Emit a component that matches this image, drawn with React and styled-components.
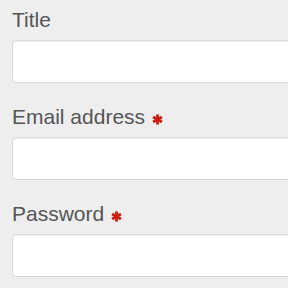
import React from "react";
import styled, { createGlobalStyle } from "styled-components";

const Global = createGlobalStyle`
  html, body {
    margin: 0;
    padding: 0;
    background: #eeeeee;
  }
  * { box-sizing: border-box; }
`;

const Form = styled.form`
  padding: 8px 0 0 12px;
  font-family: "Liberation Sans", Arial, Helvetica, sans-serif;
  width: 100%;
  overflow: hidden;
`;

const Field = styled.div`
  margin-bottom: 22px;
`;

const Label = styled.label`
  display: flex;
  align-items: center;
  height: 24px;
  line-height: 24px;
  font-size: 21px;
  color: #555555;
  margin-bottom: 8px;
`;

const Required = styled.span`
  display: inline-flex;
  margin-left: 7px;
  margin-top: 4px;
  color: #cc1f10;
`;

const Input = styled.input`
  display: block;
  width: calc(100% + 20px);
  height: 43px;
  border: 1px solid #d9d9d9;
  border-radius: 4px;
  background: #ffffff;
  box-shadow: inset 0 1px 1px rgba(0, 0, 0, 0.06);
  outline: none;
  font-family: inherit;
  font-size: 16px;
  padding: 0 10px;
`;

function Star() {
  return (
    <Required>
      <svg width="11" height="11" viewBox="0 0 12 12" aria-hidden="true">
        <g stroke="currentColor" strokeWidth="3.1" strokeLinecap="butt">
          <line x1="6" y1="0.5" x2="6" y2="11.5" />
          <line x1="1.2" y1="3.2" x2="10.8" y2="8.8" />
          <line x1="1.2" y1="8.8" x2="10.8" y2="3.2" />
        </g>
      </svg>
    </Required>
  );
}

export default function App() {
  return (
    <>
      <Global />
      <Form>
        <Field>
          <Label>Title</Label>
          <Input type="text" />
        </Field>
        <Field>
          <Label>
            Email address
            <Star />
          </Label>
          <Input type="email" />
        </Field>
        <Field>
          <Label>
            Password
            <Star />
          </Label>
          <Input type="password" />
        </Field>
      </Form>
    </>
  );
}
